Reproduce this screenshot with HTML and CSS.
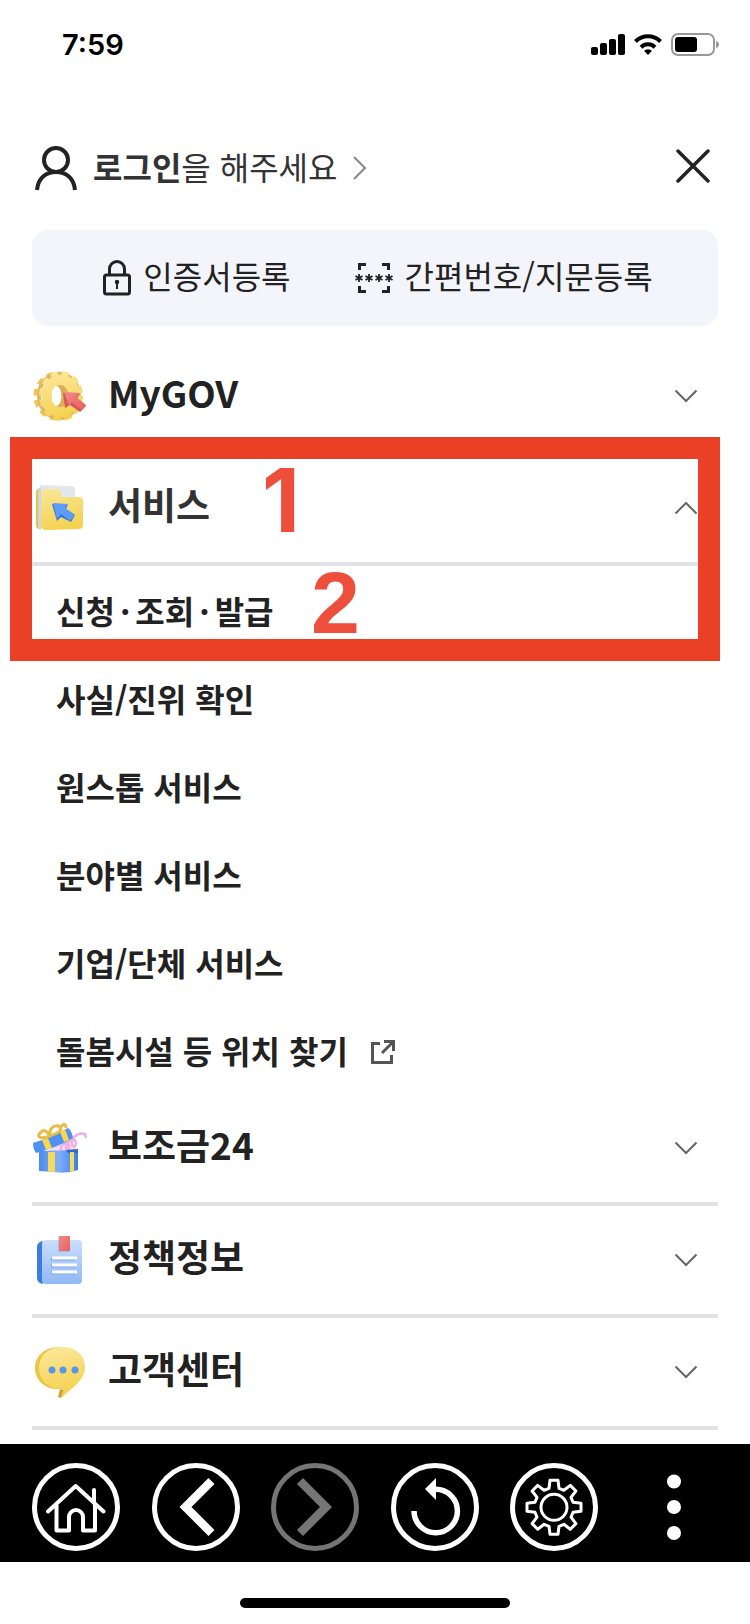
FILE: index.html
```
<!DOCTYPE html>
<html lang="ko">
<head>
<meta charset="utf-8">
<meta name="viewport" content="width=device-width, initial-scale=1">
<title>전체 메뉴</title>
<link rel="stylesheet" href="styles.css">
</head>
<body>
<header class="status">
  <span class="status-time">7:59</span>
  <span class="status-icons">
    <svg width="34" height="24" viewBox="0 0 34 24"><rect x="0" y="14" width="7" height="8" rx="2"/><rect x="9" y="10" width="7" height="12" rx="2"/><rect x="18" y="6" width="7" height="16" rx="2"/><rect x="27" y="1" width="7" height="21" rx="2"/></svg>
    <svg width="28" height="24" viewBox="0 0 28 24"><g fill="none" stroke="#000" stroke-width="4"><path d="M1.500 8.500a17.500 17.500 0 0 1 25 0"/><path d="M7 14.200a10 10 0 0 1 14 0"/></g><path d="M14 22l-4-4.200a6 6 0 0 1 8 0z"/></svg>
    <svg width="49" height="24" viewBox="0 0 49 24"><rect x="1" y="1" width="42" height="21" rx="6" fill="none" stroke="#999" stroke-width="2"/><rect x="4" y="4" width="22" height="15" rx="3"/><path d="M45 8v7q3-1 3-3.500t-3-3.500z" fill="#999"/></svg>
  </span>
</header>

<div class="top">
  <a class="login" href="#login">
    <svg width="44" height="46" viewBox="0 0 44 46" fill="none" stroke="#222" stroke-width="4"><circle cx="22" cy="15" r="12"/><path d="M3 45C4 33 12 27 22 27s18 6 19 18"/></svg>
    <span class="login-text"><b>로그인</b>을 해주세요</span>
    <svg class="login-arrow" width="14" height="24" viewBox="0 0 14 24" fill="none" stroke="#888" stroke-width="2"><path d="M1 1l11 11L1 23"/></svg>
  </a>
  <button class="close" type="button" aria-label="닫기">
    <svg width="34" height="34" viewBox="0 0 34 34" fill="none" stroke="#222" stroke-width="3.500" stroke-linecap="round"><path d="M2 2l30 30M32 2L2 32"/></svg>
  </button>
</div>

<div class="quick">
  <a class="quick-link" href="#cert">
    <svg width="28" height="36" viewBox="0 0 28 36" fill="none" stroke="#222" stroke-width="3"><rect x="1.500" y="15" width="25" height="19" rx="2"/><path d="M6.500 15V9a7.500 7.500 0 0 1 15 0v6"/><path d="M14 23v6" stroke-width="2"/><circle cx="14" cy="22" r="1.500" fill="#222" stroke-width="1.500"/></svg>
    <span class="quick-text">인증서등록</span>
  </a>
  <a class="quick-link" href="#pin">
    <svg width="38" height="32" viewBox="0 0 38 32" fill="none" stroke="#222" stroke-width="3"><path d="M4.500 8V2.500H11M27 2.500h6.500V8M4.500 24v5.500H11M27 29.500h6.500V24"/><g stroke-width="1.800"><path id="star" d="M4 12v8M.500 14l7 4M7.500 14l-7 4"/><use href="#star" x="10"/><use href="#star" x="20"/><use href="#star" x="30"/></g></svg>
    <span class="quick-text">간편번호/지문등록</span>
  </a>
</div>

<main class="menu">
  <section>
    <button class="head" type="button" aria-expanded="false">
      <svg class="pic" viewBox="0 0 56 56">
        <defs>
          <linearGradient id="gold" gradientUnits="userSpaceOnUse" x1="20" y1="4" x2="32" y2="50"><stop offset="0" stop-color="#fbe79b"/><stop offset="1" stop-color="#f4d24f"/></linearGradient>
          <linearGradient id="red" x1="0" y1="0" x2="1" y2="1"><stop offset="0" stop-color="#f08a86"/><stop offset="1" stop-color="#e9605e"/></linearGradient>
          <linearGradient id="blue" x1="0" y1="0" x2="1" y2="0"><stop offset="0" stop-color="#4a8bef"/><stop offset=".5" stop-color="#7fb0fa"/><stop offset="1" stop-color="#3d7ee6"/></linearGradient>
          <linearGradient id="sky" x1="0" y1="0" x2="0" y2="1"><stop offset="0" stop-color="#cbdefb"/><stop offset="1" stop-color="#8fb9f4"/></linearGradient>
        </defs>
        <ellipse cx="25" cy="28" rx="21" ry="22" fill="none" stroke="#ecc65c" stroke-width="5" stroke-dasharray="6.500 4.780"/>
        <ellipse cx="27" cy="28" rx="20" ry="22" fill="none" stroke="#e2b660" stroke-width="4"/>
        <ellipse cx="29" cy="28" rx="19.500" ry="22.500" fill="none" stroke="url(#gold)" stroke-width="5" stroke-dasharray="7 4.020"/>
        <ellipse cx="29" cy="28" rx="19" ry="21.500" fill="url(#gold)"/>
        <ellipse cx="28" cy="28" rx="8.500" ry="11" fill="#dfad4f"/>
        <ellipse cx="24.500" cy="28" rx="5" ry="10" fill="#fff"/>
        <path d="M31 25l2 15 5-3 10 7 6-6-9-8 3-4z" fill="#d8585a"/><path d="M32 24l16 1-4 4 10 8-4 5-10-8-3 4z" fill="url(#red)"/>
      </svg>
      <span class="head-text">MyGOV</span>
      <svg class="chev" viewBox="0 0 24 14"><path d="M1.500 1.500L12 12 22.500 1.500"/></svg>
    </button>
  </section>

  <section class="service">
    <button class="head" type="button" aria-expanded="true">
      <svg class="pic" viewBox="0 0 56 56">
        <path d="M8 5l31 1q4 0 4 4v30H8z" fill="#e3e8ef"/>
        <path d="M4 12q0-3 4-4v41q-4 0-4-4z" fill="#e5c04b"/>
        <path d="M6 11q0-4 3-4v43q-3 0-3-4z" fill="#cdd6e2"/>
        <path d="M9 12q0-3 4-3h12q4 0 4 4v4h18q4 0 4 4v24q0 4-4 4l-33 1q-5 0-5-4z" fill="url(#gold)"/>
        <path d="M20 24l5 17 4-4 10 5 4-7-9-6 2-5z" fill="#3274dc"/><path d="M21 23l15 1-3 4 10 7-5 6-9-7-4 5z" fill="#5c9bf8"/>
      </svg>
      <span class="head-text head-text-on">서비스</span>
      <svg class="chev" viewBox="0 0 24 14"><path d="M1.500 12.500L12 2l10.500 10.500"/></svg>
    </button>
    <ul class="sub">
      <li><a href="#apply"><span>신청<span class="dot">·</span>조회<span class="dot">·</span>발급</span></a></li>
      <li><a href="#verify">사실/진위 확인</a></li>
      <li><a href="#onestop">원스톱 서비스</a></li>
      <li><a href="#field">분야별 서비스</a></li>
      <li><a href="#company">기업/단체 서비스</a></li>
      <li><a href="#care">돌봄시설 등 위치 찾기
        <svg width="26" height="30" viewBox="0 0 26 30" fill="none" stroke="#555" stroke-width="3"><path d="M10 8.500H2.500v19h19V20"/><path d="M12 18L22 8"/><path d="M14 6.500h9.500V16"/></svg></a></li>
    </ul>
    <div class="mark" aria-hidden="true"><span class="mark-one">1</span><span class="mark-two">2</span></div>
  </section>

  <section>
    <button class="head" type="button" aria-expanded="false">
      <svg class="pic" viewBox="0 0 56 56">
        <path d="M14 32l24-14 6 10v4z" fill="#f6dce8"/>
        <path d="M29 31c-1-9 8-10 8-4 0 5-4 4-3 0 1-8 10-10 10-4 0 5-5 4-4-1 1-6 7-10 13-8l1 4" fill="none" stroke="#edaee5" stroke-width="2.500"/>
        <path d="M7 31l39-1v20q-12 4-24 2l-15-1z" fill="url(#blue)"/><path d="M34 30l12-1v4H36z" fill="#2f69ca"/>
        <path d="M16 32h7v20.500l-7-1zM38 32h4v19l-4 1z" fill="#f7d95c"/>
        <path d="M1 23Q18 18 36 8q4 3 5 10Q24 28 4 33q-3-4-3-10z" fill="#4f90f0"/><path d="M10 20l6-2 4 10-6 2zM28 12l5-3 4 11-5 2z" fill="#f6d754"/>
        <path d="M18 16C10 19 4 18 8 13s8-1 10 3c-1-7 3-11 8-10s3 5-1 7-6 2-7 3M28 10c2-7 6-7 6-2" fill="none" stroke="#e8bd49" stroke-width="3"/>
      </svg>
      <span class="head-text">보조금24</span>
      <svg class="chev" viewBox="0 0 24 14"><path d="M1.500 1.500L12 12 22.500 1.500"/></svg>
    </button>
  </section>

  <section>
    <button class="head" type="button" aria-expanded="false">
      <svg class="pic" viewBox="0 0 56 56">
        <path d="M5 15q0-5 6-6v43q-6-1-6-6z" fill="#3c7be0"/>
        <rect x="10" y="8" width="40" height="44" rx="4" fill="url(#sky)"/>
        <path d="M26 5h11v15H26z" fill="#8ca6d5" opacity=".5"/><path d="M27 4h11v15H27z" fill="url(#red)"/>
        <path d="M19 27h25M19 34h25M19 41h25" stroke="#7fa6e3" stroke-width="3"/><path d="M20 26h25M20 33h25M20 40h25" stroke="#fff" stroke-width="3"/>
      </svg>
      <span class="head-text">정책정보</span>
      <svg class="chev" viewBox="0 0 24 14"><path d="M1.500 1.500L12 12 22.500 1.500"/></svg>
    </button>
  </section>

  <section>
    <button class="head" type="button" aria-expanded="false">
      <svg class="pic" viewBox="0 0 56 56">
        <path d="M28 3C11 3 3 13 3 24s8 20 20 21h8V3z" fill="#ebc643"/>
        <path d="M28 45l5 1-4 8-3-1z" fill="#d1a535"/>
        <path d="M30 3c15 0 23 9 23 20 0 13-13 21-24 31l3-9C15 45 7 35 7 24 7 12 16 3 30 3z" fill="url(#gold)"/>
        <g fill="#5a94e6"><circle cx="20" cy="26" r="3.500"/><circle cx="31" cy="26" r="3.500"/><circle cx="43" cy="26" r="3.500"/></g>
      </svg>
      <span class="head-text">고객센터</span>
      <svg class="chev" viewBox="0 0 24 14"><path d="M1.500 1.500L12 12 22.500 1.500"/></svg>
    </button>
  </section>
</main>

<nav class="bar">
  <button type="button" aria-label="홈"><svg viewBox="0 0 88 88"><circle class="ring" cx="44" cy="44" r="41.500"/><path stroke-width="4" stroke-linecap="round" stroke-linejoin="round" d="M16 48.500L43.700 23l27.800 25.500M62 27v13M24.500 42v25.500H37V54a7 7 0 0 1 14 0v13.500h12V42"/></svg></button>
  <button type="button" aria-label="뒤로"><svg viewBox="0 0 88 88"><circle class="ring" cx="44" cy="44" r="41.500"/><path stroke-width="8.500" d="M59.500 18l-26 26 26 26"/></svg></button>
  <button type="button" class="off" aria-label="앞으로"><svg viewBox="0 0 88 88"><circle class="ring" cx="44" cy="44" r="41.500"/><path stroke-width="8.500" d="M29 18l26 26-26 26"/></svg></button>
  <button type="button" aria-label="새로고침"><svg viewBox="0 0 88 88"><circle class="ring" cx="44" cy="44" r="41.500"/><path stroke-width="5.500" d="M23 48a21.700 21.700 0 1 0 21.700-21.700"/><path fill="#fff" stroke="none" d="M34 26l11-11v22z"/></svg></button>
  <button type="button" aria-label="설정"><svg viewBox="0 0 88 88"><circle class="ring" cx="44" cy="44" r="41.500"/><g transform="translate(44 44.300)" stroke-width="3" stroke-linejoin="round"><circle r="13"/><path d="M-5-19L-4-27H4L5-19 9.900-17 16.300-21.900 21.900-16.300 17-9.900 19-5 27-4V4L19 5 17 9.900 21.900 16.300 16.300 21.900 9.900 17 5 19 4 27H-4L-5 19-9.900 17-16.300 21.900-21.900 16.300-17 9.900-19 5-27 4V-4L-19-5-17-9.900-21.900-16.300-16.300-21.900-9.900-17z"/></g></svg></button>
  <button type="button" aria-label="더보기"><svg viewBox="0 0 88 88"><g fill="#fff" stroke="none"><circle cx="44" cy="18.500" r="7"/><circle cx="44" cy="44" r="7"/><circle cx="44" cy="70" r="7"/></g></svg></button>
</nav>
<footer class="foot"><div class="grip"></div></footer>
</body>
</html>
```

FILE: styles.css
```
* { box-sizing: border-box; }

body {
  margin: 0;
  min-height: 100vh;
  display: flex;
  flex-direction: column;
  background: #fff;
  color: #222;
  font-family: "Noto Sans CJK KR", sans-serif;
  font-size: 32px;
  line-height: 48px;
}

button {
  margin: 0;
  padding: 0;
  border: 0;
  background: none;
  color: inherit;
  font: inherit;
  cursor: pointer;
}

a { color: inherit; text-decoration: none; }
svg { display: block; flex: none; }

.status {
  display: flex;
  justify-content: space-between;
  align-items: center;
  height: 90px;
  padding: 0 30px 0 62px;
}
.status-time {
  font-family: Inter, sans-serif;
  font-size: 29px;
  font-weight: 600;
  color: #000;
}
.status-icons { display: flex; gap: 9px; }

.top {
  display: flex;
  justify-content: space-between;
  align-items: center;
  height: 140px;
  padding: 0 40px 0 34px;
}
.login { display: flex; align-items: center; gap: 15px; padding-top: 16px; color: #333; }
.login-text { padding-bottom: 4px; }
.close { padding-top: 12px; }

.quick {
  display: flex;
  justify-content: center;
  align-items: center;
  gap: 64px;
  height: 96px;
  margin: 0 32px 16px;
  padding-left: 6px;
  border-radius: 16px;
  background: #f4f5fa;
}
.quick-link { display: flex; align-items: center; gap: 12px; }
.quick-text { padding-bottom: 6px; }

.menu { flex: 1; padding: 0 32px 14px; }

.head {
  display: flex;
  align-items: center;
  width: 100%;
  height: 112px;
  padding-right: 20px;
  border-bottom: 4px solid #e2e3ea;
  text-align: left;
}
.pic { width: 56px; height: 56px; }
.head-text {
  flex: 1;
  padding: 0 0 8px 20px;
  font-size: 37px;
  font-weight: 700;
}
.head-text-on { color: #333; }
.chev {
  width: 24px;
  height: 14px;
  fill: none;
  stroke: #666;
  stroke-width: 2;
}

.service { position: relative; }
.sub { margin: 0; padding: 0 0 0 24px; list-style: none; font-weight: 700; }
.sub a { display: flex; align-items: center; gap: 22px; height: 88px; }
.dot { margin: 0 5px; }

/* Highlight frame laid over the service group */
.mark {
  position: absolute;
  top: -17px;
  left: -22px;
  right: -2px;
  height: 224px;
  border: 22px solid #ea4025;
  color: #ee4f3d;
  font-size: 88px;
  font-weight: 700;
  line-height: 88px;
  pointer-events: none;
}
.mark-one { position: absolute; top: -3px; left: 230px; font-family: Inter, sans-serif; }
.mark-two { position: absolute; top: 100px; left: 279px; font-family: "Liberation Sans", sans-serif; }

.bar {
  display: flex;
  justify-content: space-between;
  padding: 19px 32px 11px;
  background: #000;
}
.bar svg { width: 88px; height: 88px; fill: none; stroke: #fff; }
.bar .off svg { stroke: #757575; }
.ring { stroke-width: 5; }

.foot { height: 62px; padding-top: 36px; }
.grip { width: 36%; height: 10px; margin: 0 auto; border-radius: 5px; background: #000; }
```
